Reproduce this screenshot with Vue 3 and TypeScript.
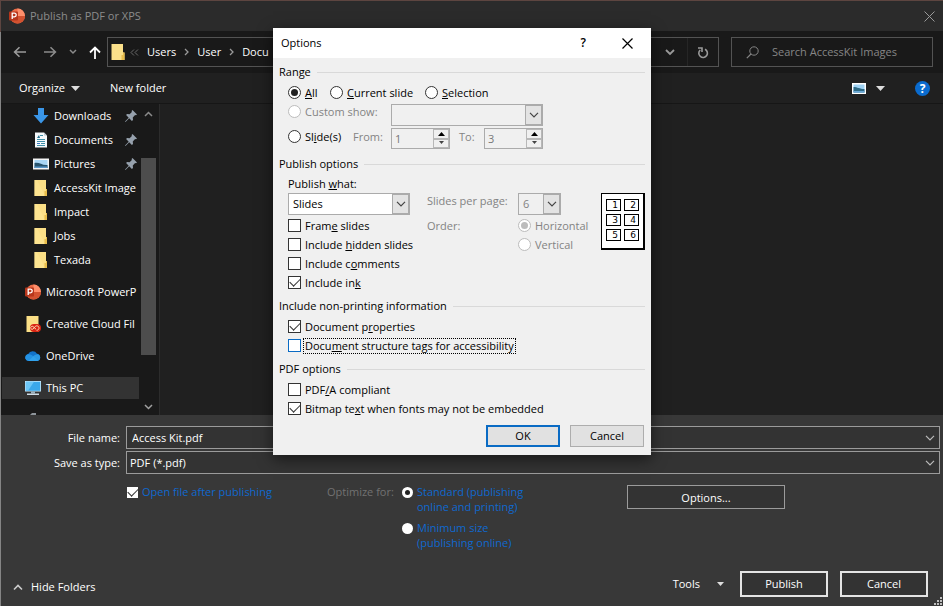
<script setup lang="ts">
import { ref } from 'vue'

type Accel = [string, string, string]

interface Place {
  name: string
  icon: string
  pinned?: boolean
}

interface Check {
  id: string
  text: Accel
  on: boolean
  focus?: boolean
}

const quick: Place[] = [
  { name: 'Downloads', icon: 'down', pinned: true },
  { name: 'Documents', icon: 'doc', pinned: true },
  { name: 'Pictures', icon: 'pic', pinned: true },
  { name: 'AccessKit Image', icon: 'folder' },
  { name: 'Impact', icon: 'folder' },
  { name: 'Jobs', icon: 'folder' },
  { name: 'Texada', icon: 'folder' },
]

const roots: Place[] = [
  { name: 'Microsoft PowerP', icon: 'ppt' },
  { name: 'Creative Cloud Fil', icon: 'cc' },
  { name: 'OneDrive', icon: 'cloud' },
  { name: 'This PC', icon: 'pc' },
  { name: '', icon: 'net' },
]

const crumbs = ['Users', 'User', 'Docu']

const publishChecks = ref<Check[]>([
  { id: 'frame', text: ['Fram', 'e', ' slides'], on: false },
  { id: 'hidden', text: ['Include ', 'h', 'idden slides'], on: false },
  { id: 'comments', text: ['Include c', 'o', 'mments'], on: false },
  { id: 'ink', text: ['Include in', 'k', ''], on: true },
])
const infoChecks = ref<Check[]>([
  { id: 'props', text: ['Document p', 'r', 'operties'], on: true },
  { id: 'tags', text: ['Docu', 'm', 'ent structure tags for accessibility'], on: false, focus: true },
])
const pdfChecks = ref<Check[]>([
  { id: 'pdfa', text: ['PDF', '/', 'A compliant'], on: false },
  { id: 'bitmap', text: ['Bitmap te', 'x', 't when fonts may not be embedded'], on: true },
])

const range = ref('all')
const what = ref('Slides')
const fileName = ref('Access Kit.pdf')
const openAfter = ref(true)
const optimize = ref('standard')
const thumbs = [1, 2, 3, 4, 5, 6]
</script>

<template>
  <div class="window">
    <header class="titlebar">
      <svg class="i16" viewBox="0 0 16 16">
        <circle cx="8.500" cy="8" r="7.500" fill="#ed6c47" />
        <path d="M8.500 .5a7.500 7.500 0 0 1 7.500 7.500H8.500z" fill="#ff8f6b" />
        <path d="M1 8h15a7.500 7.500 0 0 1-15 0z" fill="#d35230" />
        <rect x="0" y="3.500" width="9" height="9" rx="1" fill="#b7361b" />
        <path d="M3.200 11V5.200h2.200a1.700 1.700 0 0 1 0 3.600H3.400" fill="none" stroke="#fff" stroke-width="1.300" />
      </svg>
      <h1>Publish as PDF or XPS</h1>
      <button class="bare close" aria-label="Close">
        <svg width="11" height="11" viewBox="0 0 11 11"><path d="M.5.5l10 10M10.500.5l-10 10" stroke="#9a9a9a" fill="none" /></svg>
      </button>
    </header>

    <nav class="navbar">
      <div class="arrows">
        <button class="bare" aria-label="Back">
          <svg width="14" height="12" viewBox="0 0 14 12"><path d="M13 6H2M6.500 1.200L1.600 6l4.900 4.800" stroke="#9b9b9b" stroke-width="1.600" fill="none" /></svg>
        </button>
        <button class="bare" aria-label="Forward">
          <svg width="14" height="12" viewBox="0 0 14 12"><path d="M1 6h11M7.500 1.200L12.400 6l-4.900 4.800" stroke="#8b8b8b" stroke-width="1.600" fill="none" /></svg>
        </button>
        <button class="bare" aria-label="Recent locations">
          <svg width="8" height="6" viewBox="0 0 8 6"><path d="M1 1l3 3 3-3" stroke="#8b8b8b" stroke-width="1.500" fill="none" /></svg>
        </button>
        <button class="bare" aria-label="Up">
          <svg width="12" height="13" viewBox="0 0 12 13"><path d="M6 13V2M1 6.500l5-5 5 5" stroke="#fff" stroke-width="1.800" fill="none" /></svg>
        </button>
      </div>
      <div class="address">
        <svg width="14" height="16" viewBox="0 0 14 16">
          <path d="M.5 0H12v8.500h1.500V16H.5z" fill="#fbe08a" /><path d="M10.500 15.500v-4.500h1.500V8.500h1.500V16h-3z" fill="#e9be4c" />
        </svg>
        <svg width="9" height="7" viewBox="0 0 9 7"><path d="M4 .5l-3 3 3 3M8 .5l-3 3 3 3" stroke="#6a6a6a" fill="none" /></svg>
        <template v-for="(c, i) in crumbs" :key="c">
          <svg v-if="i" width="5" height="8" viewBox="0 0 5 8"><path d="M1 1l3 3-3 3" stroke="#9a9a9a" stroke-width="1.300" fill="none" /></svg>
          <a href="#">{{ c }}</a>
        </template>
        <button class="bare history" aria-label="Previous locations">
          <svg width="10" height="7" viewBox="0 0 10 7"><path d="M1 1l4 4 4-4" stroke="#9a9a9a" stroke-width="1.800" fill="none" /></svg>
        </button>
        <button class="bare refresh" aria-label="Refresh">
          <svg width="12" height="13" viewBox="0 0 12 13"><path d="M8 3.300A4.300 4.300 0 1 1 3.200 4M1 2h4v4" stroke="#9a9a9a" stroke-width="1.600" fill="none" /></svg>
        </button>
      </div>
      <label class="search">
        <svg width="13" height="13" viewBox="0 0 13 13"><circle cx="8" cy="5" r="4.200" stroke="#858585" fill="none" /><path d="M5 8L.8 12.200" stroke="#858585" stroke-width="1.200" /></svg>
        <input type="text" placeholder="Search AccessKit Images" aria-label="Search AccessKit Images" />
      </label>
    </nav>

    <div class="toolbar">
      <button class="bare organize">Organize
        <svg width="9" height="5" viewBox="0 0 9 5"><path d="M0 0h9L4.500 5z" fill="#ddd" /></svg>
      </button>
      <button class="bare">New folder</button>
      <div class="views">
        <button class="bare view" aria-label="Change view">
          <svg width="14" height="11" viewBox="0 0 14 11"><path d="M0 0h14v11H0z" fill="#fff" /><path d="M1.500 1.500h11v8h-11z" fill="#9fd3f5" /><path d="M1.500 4c4 0 6 2 11 2v3.500h-11z" fill="#2f6b86" /><path d="M1.500 8h11v1.500h-11z" fill="#6aa9d8" /></svg>
          <svg width="9" height="5" viewBox="0 0 9 5"><path d="M0 0h9L4.500 5z" fill="#ddd" /></svg>
        </button>
        <button class="help" aria-label="Help">?</button>
      </div>
    </div>

    <div class="main">
      <aside class="sidebar">
        <div class="tree">
          <a v-for="p in quick" :key="p.name" href="#" class="place nested">
            <span class="ico">
              <svg v-if="p.icon === 'down'" class="i16" viewBox="0 0 16 16"><path d="M5 0h6v7h4.500L8 15.500.5 7H5z" fill="#3a96e8" /></svg>
              <svg v-else-if="p.icon === 'doc'" class="i16" viewBox="0 0 16 16"><path d="M2 .5h9L14 3.500v12H2z" fill="#f6f9fb" /><path d="M11 .5V3.500h3" fill="#b9c6cf" /><path d="M7 3.500h3M4 7.500h8M4 9.500h8M8 11.500h4M4 13.500h8" stroke="#3f8fa8" /><path d="M4 6l2-3 1 3z" fill="#23708c" /><path d="M4 11h3v1H4z" fill="#3b78c4" /></svg>
              <svg v-else-if="p.icon === 'pic'" class="i16" viewBox="0 0 16 16"><path d="M0 2.500h16v11H0z" fill="#f5f5f5" /><path d="M1.500 4h13v8h-13z" fill="#a9d6f5" /><path d="M1.500 7c5-1 7 2.500 13 2v3h-13z" fill="#28546e" /><path d="M1.500 10.500h13V12h-13z" fill="#5b97c9" /></svg>
              <svg v-else class="i16" viewBox="0 0 16 16"><path d="M1.500 0H13v9h1v7H1.500z" fill="#fbdf86" /><path d="M1.500 0H4l8 16H1.500z" fill="#ffe797" opacity=".6" /><path d="M11.500 16v-5H13V9h1v7z" fill="#e8bd4b" /></svg>
            </span>
            <span class="name">{{ p.name }}</span>
            <svg v-if="p.pinned" class="pin" width="12" height="12" viewBox="0 0 12 12"><path d="M7.500 0L12 4.500l-1 .8-.9-.2-2.300 2.300.2 2.600-1.100.9-2.700-2.700L.5 12 0 11.500l3.700-3.800L1.100 5.100l.9-1 2.600.2L6.900 2l-.3-1z" fill="#96a1ad" /></svg>
          </a>
          <div class="gap"></div>
          <a v-for="p in roots" :key="p.icon" href="#" class="place root" :class="{ on: p.icon === 'pc' }">
            <span class="ico">
              <svg v-if="p.icon === 'ppt'" class="i16" viewBox="0 0 16 16"><circle cx="8.500" cy="8" r="7.500" fill="#ed6c47" /><path d="M8.500.5A7.500 7.500 0 0 1 16 8H8.500z" fill="#ff8f6b" /><path d="M1 8h15a7.500 7.500 0 0 1-15 0z" fill="#d35230" /><rect y="3.500" width="9" height="9" rx="1" fill="#b7361b" /><path d="M3.200 11V5.200h2.200a1.700 1.700 0 0 1 0 3.600H3.400" fill="none" stroke="#fff" stroke-width="1.300" /></svg>
              <svg v-else-if="p.icon === 'cc'" class="i16" viewBox="0 0 16 16"><path d="M1.500 0h12v16h-12z" fill="#fbdf86" /><rect x="5" y="8" width="11" height="8" rx="4" fill="#da2414" /><path d="M11.500 14.200a2.200 2.200 0 1 0-1.200-3.800L7.800 13.200a1.500 1.500 0 1 1 .4-2.500l2.800 2.500" fill="none" stroke="#ffd9b0" /></svg>
              <svg v-else-if="p.icon === 'cloud'" class="i16" viewBox="0 0 16 16"><path d="M3.500 13a3.500 3.500 0 0 1-.3-6.900A5 5 0 0 1 12 5.800a3.700 3.700 0 0 1 .6 7.200z" fill="#1273ca" /><path d="M3.500 13a3.400 3.400 0 0 1-1.300-6.500C4 5.800 5.500 6.300 7 7.200l6.500 5.700-.9.100z" fill="#2492e3" /><path d="M7 9.500c2-2.500 4-3.300 6-3.200a3.500 3.500 0 0 1-.5 6.700h-9z" fill="#38a9ef" opacity=".7" /></svg>
              <svg v-else-if="p.icon === 'pc'" class="i16" viewBox="0 0 16 16"><path d="M0 1h16v10.500H0z" fill="#c5e8fb" /><path d="M.8 1.800h14.400v9H.8z" fill="#3aa8ea" /><path d="M.8 1.800H9l-6 9H.8z" fill="#6cc6f6" /><path d="M6 11.500h4v2H6z" fill="#9db4c2" /><path d="M2 13.500h12V15H2z" fill="#cfdde6" /></svg>
              <svg v-else class="i16" viewBox="0 0 16 16"><path d="M4 4l3-3h4v3L5 7z" fill="#8d949a" /></svg>
            </span>
            <span class="name">{{ p.name }}</span>
          </a>
        </div>
        <div class="scroll">
          <svg width="9" height="6" viewBox="0 0 9 6"><path d="M1 5l3.500-3.500L8 5" stroke="#8a8a8a" stroke-width="1.500" fill="none" /></svg>
          <span class="thumb"></span>
          <svg width="9" height="6" viewBox="0 0 9 6"><path d="M1 1l3.500 3.500L8 1" stroke="#a0a0a0" stroke-width="1.500" fill="none" /></svg>
        </div>
      </aside>
      <section class="files"></section>
    </div>

    <footer class="footer">
      <div class="fields">
        <label for="fname">File name:</label>
        <div class="combo dark">
          <input id="fname" v-model="fileName" type="text" />
          <svg width="10" height="6" viewBox="0 0 10 6"><path d="M1 .8l4 4 4-4" stroke="#bbb" stroke-width="1.200" fill="none" /></svg>
        </div>
        <label for="ftype">Save as type:</label>
        <div class="combo dark">
          <select id="ftype"><option>PDF (*.pdf)</option></select>
          <svg width="10" height="6" viewBox="0 0 10 6"><path d="M1 .8l4 4 4-4" stroke="#bbb" stroke-width="1.200" fill="none" /></svg>
        </div>
      </div>
      <div class="settings">
        <label class="after"><input v-model="openAfter" type="checkbox" /><span>Open file after publishing</span></label>
        <span class="optlabel">Optimize for:</span>
        <div class="opts">
          <label><input v-model="optimize" type="radio" name="opt" value="standard" /><span>Standard (publishing online and printing)</span></label>
          <label><input v-model="optimize" type="radio" name="opt" value="minimum" /><span>Minimum size (publishing online)</span></label>
        </div>
        <button class="optbtn">Options...</button>
      </div>
      <div class="actions">
        <button class="bare hide">
          <svg width="10" height="7" viewBox="0 0 10 7"><path d="M1 5.500l4-4 4 4" stroke="#ccc" stroke-width="1.600" fill="none" /></svg>
          Hide Folders
        </button>
        <button class="bare tools">Tools
          <svg width="7" height="4" viewBox="0 0 7 4"><path d="M0 0h7L3.500 4z" fill="#ddd" /></svg>
        </button>
        <button class="big">Publish</button>
        <button class="big">Cancel</button>
      </div>
      <svg class="grip" width="9" height="9" viewBox="0 0 9 9"><path d="M6 0h2v2H6zM3 3h2v2H3zM6 3h2v2H6zM0 6h2v2H0zM3 6h2v2H3zM6 6h2v2H6z" fill="#bdbdbd" /></svg>
    </footer>

    <div class="dialog" role="dialog" aria-labelledby="dlg-title">
      <header class="dhead">
        <h2 id="dlg-title">Options</h2>
        <button class="bare dhelp" aria-label="Help">?</button>
        <button class="bare" aria-label="Close options">
          <svg width="11" height="11" viewBox="0 0 11 11"><path d="M.5.5l10 10M10.500.5l-10 10" stroke="#000" stroke-width="1.200" fill="none" /></svg>
        </button>
      </header>
      <form class="dbody" @submit.prevent>
        <h3>Range</h3>
        <div class="range">
          <div class="radios">
            <label class="choice"><input v-model="range" type="radio" name="range" value="all" /><span><u>A</u>ll</span></label>
            <label class="choice"><input v-model="range" type="radio" name="range" value="current" /><span><u>C</u>urrent slide</span></label>
            <label class="choice"><input v-model="range" type="radio" name="range" value="selection" /><span><u>S</u>election</span></label>
          </div>
          <div class="row">
            <label class="choice off"><input type="radio" name="range" value="custom" disabled /><span>Custom show:</span></label>
            <div class="combo light off show">
              <select disabled aria-label="Custom show"><option></option></select>
              <span class="drop"><svg width="10" height="6" viewBox="0 0 10 6"><path d="M1 .8l4 4 4-4" stroke="#444" stroke-width="1.200" fill="none" /></svg></span>
            </div>
          </div>
          <div class="row">
            <label class="choice"><input v-model="range" type="radio" name="range" value="slides" /><span>Sl<u>i</u>de(s)</span></label>
            <label class="from" for="from">From:</label>
            <div class="spin">
              <input id="from" type="text" value="1" disabled />
              <span class="steps">
                <button type="button" aria-label="Increase from"><svg width="7" height="4" viewBox="0 0 7 4"><path d="M0 4h7L3.500 0z" fill="#000" /></svg></button>
                <button type="button" aria-label="Decrease from"><svg width="7" height="4" viewBox="0 0 7 4"><path d="M1 0h5L3.500 3z" fill="#444" /></svg></button>
              </span>
            </div>
            <label class="to" for="to">To:</label>
            <div class="spin">
              <input id="to" type="text" value="3" disabled />
              <span class="steps">
                <button type="button" aria-label="Increase to"><svg width="7" height="4" viewBox="0 0 7 4"><path d="M0 4h7L3.500 0z" fill="#000" /></svg></button>
                <button type="button" aria-label="Decrease to"><svg width="7" height="4" viewBox="0 0 7 4"><path d="M1 0h5L3.500 3z" fill="#444" /></svg></button>
              </span>
            </div>
          </div>
        </div>

        <h3>Publish options</h3>
        <div class="publish">
          <div class="pcol">
            <label class="plabel" for="what">Publish <u>w</u>hat:</label>
            <div class="combo light">
              <select id="what" v-model="what"><option>Slides</option></select>
              <span class="drop"><svg width="10" height="6" viewBox="0 0 10 6"><path d="M1 .8l4 4 4-4" stroke="#444" stroke-width="1.200" fill="none" /></svg></span>
            </div>
            <div class="checks">
              <label v-for="c in publishChecks" :key="c.id" class="choice"><input v-model="c.on" type="checkbox" /><span>{{ c.text[0] }}<u>{{ c.text[1] }}</u>{{ c.text[2] }}</span></label>
            </div>
          </div>
          <div class="layout">
            <label for="per">Slides per page:</label>
            <div class="combo light off per">
              <select id="per" disabled><option>6</option></select>
              <span class="drop"><svg width="10" height="6" viewBox="0 0 10 6"><path d="M1 .8l4 4 4-4" stroke="#444" stroke-width="1.200" fill="none" /></svg></span>
            </div>
            <span class="olabel">Order:</span>
            <div class="order">
              <label class="choice off"><input type="radio" name="order" checked disabled /><span>Horizontal</span></label>
              <label class="choice off"><input type="radio" name="order" disabled /><span>Vertical</span></label>
            </div>
          </div>
          <div class="sheet"><span v-for="n in thumbs" :key="n">{{ n }}</span></div>
        </div>

        <h3>Include non-printing information</h3>
        <div class="checks inset">
          <label v-for="c in infoChecks" :key="c.id" class="choice" :class="{ focus: c.focus }"><input v-model="c.on" type="checkbox" /><span>{{ c.text[0] }}<u>{{ c.text[1] }}</u>{{ c.text[2] }}</span></label>
        </div>

        <h3>PDF options</h3>
        <div class="checks inset">
          <label v-for="c in pdfChecks" :key="c.id" class="choice"><input v-model="c.on" type="checkbox" /><span>{{ c.text[0] }}<u>{{ c.text[1] }}</u>{{ c.text[2] }}</span></label>
        </div>

        <div class="buttons">
          <button type="submit" class="ok">OK</button>
          <button type="button">Cancel</button>
        </div>
      </form>
    </div>
  </div>
</template>

<style>
body {
  margin: 0;
  background: #383838;
}
</style>

<style scoped>
.window,
.window * {
  box-sizing: border-box;
}
.window {
  position: relative;
  display: flex;
  flex-direction: column;
  height: 100vh;
  padding: 1px 0 0 1px;
  overflow: hidden;
  background: linear-gradient(#5d4540 0 32px, #858585 32px);
  color: #fff;
  font: 11px/16px 'Open Sans', 'Noto Sans', sans-serif;
}
button,
input,
select {
  font: inherit;
  color: inherit;
  border-radius: 0;
}
svg {
  display: block;
  flex: none;
}
h1,
h2,
h3 {
  margin: 0;
  font-size: inherit;
  font-weight: 400;
}
a {
  color: inherit;
  text-decoration: none;
}
.bare {
  display: flex;
  align-items: center;
  padding: 0;
  border: 0;
  background: none;
}
.i16 {
  width: 16px;
  height: 16px;
}
input[type='text'],
select {
  flex: 1;
  min-width: 0;
  width: 100%;
  padding: 0;
  border: 0;
  outline: 0;
  background: none;
  appearance: none;
  opacity: 1;
}

/* title bar and navigation */
.titlebar {
  display: flex;
  align-items: center;
  height: 30px;
  padding: 0 8px;
  gap: 5px;
  background: #2b2b2b;
  color: #8c8c8c;
}
.close {
  margin-left: auto;
}
.navbar {
  display: flex;
  align-items: center;
  height: 42px;
  padding: 0 10px 0 12px;
  background: #191919;
}
.arrows {
  display: flex;
  align-items: center;
  width: 94px;
  gap: 12px;
}
.arrows button:first-child {
  margin-right: 4px;
}
.address {
  flex: 1;
  display: flex;
  align-items: center;
  gap: 8px;
  height: 30px;
  padding-left: 3px;
  margin-right: 12px;
  border: 1px solid #535353;
}
.address svg + svg {
  margin-left: -3px;
}
.history {
  height: 100%;
  margin-left: auto;
  padding-right: 4px;
}
.refresh {
  height: 100%;
  padding: 0 9px;
  border-left: 1px solid #262626;
}
.search {
  display: flex;
  align-items: center;
  gap: 13px;
  width: 202px;
  height: 30px;
  padding: 0 14px;
  border: 1px solid #535353;
}
.search input::placeholder {
  color: #868686;
  opacity: 1;
}
.toolbar {
  display: flex;
  align-items: center;
  height: 31px;
  padding: 0 13px 0 18px;
  gap: 30px;
  border-bottom: 1px solid #161616;
  background: #202020;
}
.organize {
  gap: 6px;
}
.views {
  display: flex;
  align-items: center;
  gap: 30px;
  margin-left: auto;
}
.view {
  gap: 10px;
}
.help {
  width: 15px;
  height: 15px;
  padding: 0;
  border: 0;
  border-radius: 50%;
  background: #0a6bce;
  font-size: 12px;
  font-weight: 700;
  line-height: 15px;
}

/* sidebar and file area */
.main {
  flex: 1;
  display: flex;
  min-height: 0;
}
.sidebar {
  display: flex;
  width: 159px;
  overflow: hidden;
  border-right: 1px solid #2c2c2c;
  background: #191919;
}
.tree {
  width: 138px;
  overflow: hidden;
}
.place {
  display: flex;
  align-items: center;
  white-space: nowrap;
}
.nested {
  height: 24px;
  padding: 0 2px 0 32px;
  gap: 5px;
}
.nested .name {
  flex: 1;
}
.gap {
  height: 4px;
}
.root {
  height: 22px;
  margin: 5px 0 10px 1px;
  padding-left: 23px;
  gap: 5px;
}
.on {
  background: #333;
}
.scroll {
  display: flex;
  flex-direction: column;
  align-items: center;
  width: 15px;
  margin-left: 2px;
  padding: 7px 0 5px;
}
.thumb {
  width: 15px;
  height: 197px;
  margin: 41px 0 auto;
  background: #4d4d4d;
}
.files {
  flex: 1;
  background: #202020;
}

/* footer */
.footer {
  position: relative;
  display: flex;
  flex-direction: column;
  height: 191px;
  padding: 11px 3px 9px 0;
  background: #383838;
}
.fields {
  display: grid;
  grid-template-columns: 119px 1fr;
  gap: 2px 6px;
  align-items: center;
}
.fields label {
  text-align: right;
}
.combo {
  position: relative;
  display: flex;
  align-items: center;
}
.dark {
  height: 23px;
  padding: 0 4px 0 3px;
  border: 1px solid #9b9b9b;
  background: #333;
}
.dark input {
  padding-left: 2px;
}
.settings {
  display: grid;
  grid-template-columns: 200px 75px 225px 158px;
  align-items: start;
  margin-top: 10px;
  padding-left: 126px;
  color: #0f68cf;
  line-height: 15px;
}
.settings label {
  display: flex;
  gap: 4px;
}
.after,
.optlabel {
  white-space: nowrap;
}
.optlabel {
  color: #727272;
}
.opts {
  display: flex;
  flex-direction: column;
  gap: 6px;
}
.opts span {
  width: 116px;
}
.settings input {
  flex: none;
  display: grid;
  place-items: center;
  appearance: none;
  width: 11px;
  height: 11px;
  margin: 3px 0 0;
  background: #fff;
}
.settings input[type='radio'] {
  border-radius: 50%;
}
.settings input[type='radio']:checked::before {
  content: '';
  width: 5px;
  height: 5px;
  border-radius: 50%;
  background: #222;
}
input[type='checkbox']:checked::before {
  content: '';
  width: 9px;
  height: 5px;
  margin-bottom: 3px;
  border: solid #333;
  border-width: 0 0 1px 1px;
  transform: rotate(-45deg);
}
.optbtn {
  height: 24px;
  margin-top: 1px;
  padding: 0;
  border: 1px solid #9b9b9b;
  background: #333;
  color: #fff;
}
.actions {
  display: flex;
  align-items: center;
  gap: 12px;
  margin-top: auto;
  padding: 0 12px;
}
.hide {
  gap: 8px;
  margin-right: auto;
  padding-top: 6px;
}
.tools {
  gap: 17px;
  margin-right: 4px;
}
.big {
  width: 88px;
  height: 26px;
  padding: 0;
  border: 2px solid #e4e4e4;
  background: #333;
}
.grip {
  position: absolute;
  right: 0;
  bottom: 0;
}

/* options dialog */
.dialog {
  position: absolute;
  left: 273px;
  top: 28px;
  width: 378px;
  background: #f0f0f0;
  color: #000;
  box-shadow: 0 4px 14px rgba(0, 0, 0, 0.55);
}
.dhead {
  display: flex;
  align-items: center;
  height: 30px;
  padding: 0 18px 0 8px;
  gap: 36px;
  background: #fff;
}
.dhelp {
  margin-left: auto;
  font-size: 12px;
  font-weight: 600;
}
.dbody {
  padding: 6px 6px 8px;
}
h3 {
  display: flex;
  align-items: center;
  gap: 6px;
  height: 16px;
}
h3::after {
  content: '';
  flex: 1;
  height: 1px;
  background: #d9d9d9;
}
.choice {
  display: flex;
  align-items: center;
  gap: 4px;
  height: 19px;
  white-space: nowrap;
}
.choice input {
  flex: none;
  display: grid;
  place-items: center;
  appearance: none;
  width: 13px;
  height: 13px;
  margin: 0;
  border: 1px solid #333;
  background: #fff;
}
.choice input[type='radio'] {
  border-radius: 50%;
}
.choice input[type='radio']:checked::before {
  content: '';
  width: 7px;
  height: 7px;
  border-radius: 50%;
  background: #222;
}
.off,
.from,
.to,
.layout {
  color: #838383;
}
.off input[type='radio'] {
  border-color: #bcbcbc;
}
.choice.off input[type='radio']:checked::before {
  background: #bcbcbc;
}
.range {
  padding: 3px 9px 4px;
}
.radios {
  display: grid;
  grid-template-columns: 42px 95px auto;
}
.row {
  display: flex;
  align-items: flex-start;
  height: 25px;
}
.row > .choice {
  width: 103px;
}
.row:nth-child(3) > .choice {
  width: 65px;
}
.light {
  height: 22px;
  padding-left: 4px;
  border: 1px solid #ababab;
  background: #fff;
}
.light.off {
  background: #f0f0f0;
}
.drop {
  display: grid;
  place-items: center;
  width: 17px;
  height: 20px;
  border: 1px solid #ababab;
  background: #e3e3e3;
}
.show {
  width: 152px;
  margin-top: 2px;
}
.from,
.to {
  width: 38px;
  line-height: 19px;
}
.to {
  width: 25px;
}
.spin {
  display: flex;
  width: 59px;
  height: 21px;
  margin: 1px 9px 0 0;
  border: 1px solid #ababab;
  color: #777;
}
.spin input {
  padding-left: 3px;
}
.steps {
  display: grid;
  width: 16px;
  flex: none;
}
.steps button {
  display: grid;
  place-items: center;
  padding: 0;
  border: 1px solid #b8b8b8;
  background: #f0f0f0;
}
.publish {
  display: flex;
  padding: 4px 0 6px 9px;
}
.pcol {
  width: 122px;
  margin-right: 17px;
}
.plabel {
  display: block;
  height: 17px;
}
.pcol .checks {
  padding-top: 1px;
}
.layout {
  display: grid;
  grid-template-columns: 91px 76px;
  grid-template-rows: 23px auto;
  align-content: start;
  align-items: start;
  padding-top: 17px;
  white-space: nowrap;
}
.olabel {
  line-height: 19px;
}
.per {
  width: 43px;
}
.sheet {
  display: grid;
  grid-template-columns: 15px 15px;
  grid-auto-rows: 12px;
  gap: 3px;
  width: 44px;
  height: 57px;
  margin: 17px 0 0 7px;
  padding: 5px 4px;
  border: solid #000;
  border-width: 1px 2px 2px 1px;
  background: #fff;
}
.sheet span {
  padding-right: 2px;
  border: 1px solid #000;
  font: 9px/10px 'DejaVu Sans', sans-serif;
  text-align: right;
}
.inset {
  padding: 3px 9px 6px;
}
.focus input {
  border-color: #0a6bc4;
}
.focus span {
  margin: 0 -2px;
  padding: 0 2px;
  outline: 1px dotted #000;
  outline-offset: -1px;
  line-height: 16px;
}
.buttons {
  display: flex;
  justify-content: flex-end;
  gap: 10px;
  margin-top: 1px;
  padding-right: 1px;
}
.buttons button {
  width: 74px;
  height: 22px;
  padding: 0;
  border: 1px solid #adadad;
  background: #e1e1e1;
}
.buttons .ok {
  border: 2px solid #0a6bc4;
}
</style>
